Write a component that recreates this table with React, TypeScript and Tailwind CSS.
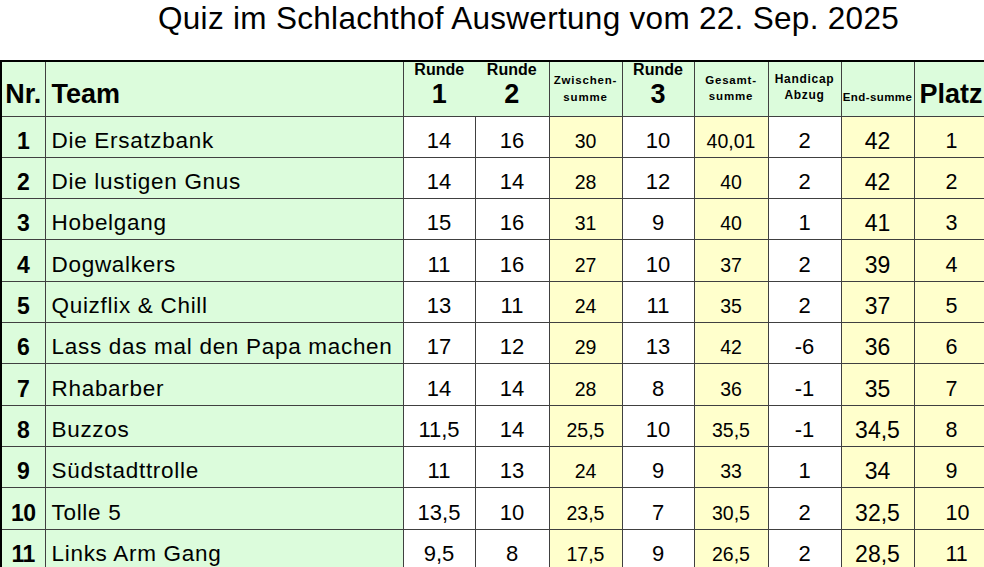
import React from "react";

type Row = {
  nr: number;
  team: string;
  r1: string;
  r2: string;
  zw: string;
  r3: string;
  ges: string;
  hc: string;
  end: string;
  platz: string;
};

const rows: Row[] = [
  { nr: 1, team: "Die Ersatzbank", r1: "14", r2: "16", zw: "30", r3: "10", ges: "40,01", hc: "2", end: "42", platz: "1" },
  { nr: 2, team: "Die lustigen Gnus", r1: "14", r2: "14", zw: "28", r3: "12", ges: "40", hc: "2", end: "42", platz: "2" },
  { nr: 3, team: "Hobelgang", r1: "15", r2: "16", zw: "31", r3: "9", ges: "40", hc: "1", end: "41", platz: "3" },
  { nr: 4, team: "Dogwalkers", r1: "11", r2: "16", zw: "27", r3: "10", ges: "37", hc: "2", end: "39", platz: "4" },
  { nr: 5, team: "Quizflix & Chill", r1: "13", r2: "11", zw: "24", r3: "11", ges: "35", hc: "2", end: "37", platz: "5" },
  { nr: 6, team: "Lass das mal den Papa machen", r1: "17", r2: "12", zw: "29", r3: "13", ges: "42", hc: "-6", end: "36", platz: "6" },
  { nr: 7, team: "Rhabarber", r1: "14", r2: "14", zw: "28", r3: "8", ges: "36", hc: "-1", end: "35", platz: "7" },
  { nr: 8, team: "Buzzos", r1: "11,5", r2: "14", zw: "25,5", r3: "10", ges: "35,5", hc: "-1", end: "34,5", platz: "8" },
  { nr: 9, team: "Südstadttrolle", r1: "11", r2: "13", zw: "24", r3: "9", ges: "33", hc: "1", end: "34", platz: "9" },
  { nr: 10, team: "Tolle 5", r1: "13,5", r2: "10", zw: "23,5", r3: "7", ges: "30,5", hc: "2", end: "32,5", platz: "10" },
  { nr: 11, team: "Links Arm Gang", r1: "9,5", r2: "8", zw: "17,5", r3: "9", ges: "26,5", hc: "2", end: "28,5", platz: "11" },
];

const font = { fontFamily: '"Liberation Sans", Arial, sans-serif' };

const line = "border border-[#404040]";
const green = "bg-[#dcfcdc]";
const yellow = "bg-[#ffffcc]";
const body = "align-bottom text-center leading-[22px] p-0 pb-[5px]";

export default function App() {
  return (
    <div className="w-[984px] h-[567px] overflow-hidden bg-white text-black" style={font}>
      {/* Title */}
      <div className="h-[60px] pl-[158px]">
        <h1 className="text-[31.5px] leading-[36px] font-normal tracking-[0.3px] whitespace-nowrap">
          Quiz im Schlachthof Auswertung vom 22. Sep. 2025
        </h1>
      </div>

      <table className="table-fixed border-collapse w-[990px] border-t-2 border-l-2 border-black">
        <colgroup>
          <col className="w-[44px]" />
          <col className="w-[358px]" />
          <col className="w-[72px]" />
          <col className="w-[74px]" />
          <col className="w-[73px]" />
          <col className="w-[72px]" />
          <col className="w-[74px]" />
          <col className="w-[73px]" />
          <col className="w-[73px]" />
          <col className="w-[77px]" />
        </colgroup>
        <thead>
          <tr className="h-[55px]">
            <th className={`${line} ${green} border-l-0 border-t-0 align-bottom p-0 pb-[8px] text-[27px] font-bold leading-none text-center`}>
              Nr.
            </th>
            <th className={`${line} ${green} border-t-0 align-bottom p-0 pb-[8px] pl-[6px] text-[27px] font-bold leading-none text-left`}>
              Team
            </th>
            <th className={`${line} ${green} border-t-0 border-r-0 align-top p-0 font-bold text-center`}>
              <div className="flex flex-col items-center">
                <span className="text-[16px] leading-none">Runde</span>
                <span className="text-[27px] leading-none mt-[3px]">1</span>
              </div>
            </th>
            <th className={`${line} ${green} border-t-0 border-l-0 align-top p-0 font-bold text-center`}>
              <div className="flex flex-col items-center">
                <span className="text-[16px] leading-none">Runde</span>
                <span className="text-[27px] leading-none mt-[3px]">2</span>
              </div>
            </th>
            <th className={`${line} ${green} border-t-0 align-top p-0 font-bold text-center`}>
              <div className="flex flex-col items-center pt-[10px] text-[11.5px] leading-[17px] tracking-[0.8px]">
                <span>Zwischen-</span>
                <span>summe</span>
              </div>
            </th>
            <th className={`${line} ${green} border-t-0 align-top p-0 font-bold text-center`}>
              <div className="flex flex-col items-center">
                <span className="text-[16px] leading-none">Runde</span>
                <span className="text-[27px] leading-none mt-[3px]">3</span>
              </div>
            </th>
            <th className={`${line} ${green} border-t-0 align-top p-0 font-bold text-center`}>
              <div className="flex flex-col items-center pt-[10px] text-[11.5px] leading-[16px] tracking-[0.8px]">
                <span>Gesamt-</span>
                <span>summe</span>
              </div>
            </th>
            <th className={`${line} ${green} border-t-0 align-top p-0 font-bold text-center`}>
              <div className="flex flex-col items-center pt-[9px] text-[12px] leading-[16px] tracking-[0.7px]">
                <span>Handicap</span>
                <span>Abzug</span>
              </div>
            </th>
            <th className={`${line} ${green} border-t-0 align-bottom p-0 pb-[12px] font-bold text-center text-[11.5px] leading-none tracking-[0.4px] whitespace-nowrap`}>
              End-summe
            </th>
            <th className={`${line} ${green} border-t-0 align-bottom p-0 pb-[8px] pl-[5px] text-[27px] font-bold leading-none text-left`}>
              Platz
            </th>
          </tr>
        </thead>
        <tbody>
          {rows.map((r) => (
            <tr key={r.nr} className="h-[41.33px]">
              <td className={`${line} ${green} border-l-0 ${body} text-[23px] font-bold tracking-[-0.5px]`}>{r.nr}</td>
              <td className={`${line} ${green} ${body} text-left pl-[6px] text-[22.5px] tracking-[0.7px] whitespace-nowrap`}>
                {r.team}
              </td>
              <td className={`${line} bg-white ${body} text-[22px]`}>{r.r1}</td>
              <td className={`${line} bg-white ${body} text-[22px]`}>{r.r2}</td>
              <td className={`${line} ${yellow} ${body} text-[19.5px]`}>{r.zw}</td>
              <td className={`${line} bg-white ${body} text-[22px]`}>{r.r3}</td>
              <td className={`${line} ${yellow} ${body} text-[19.5px]`}>{r.ges}</td>
              <td className={`${line} bg-white ${body} text-[22px]`}>{r.hc}</td>
              <td className={`${line} ${yellow} ${body} text-[23px]`}>{r.end}</td>
              <td className={`${line} ${yellow} ${body} text-[21.5px] text-left pl-[31px]`}>{r.platz}</td>
            </tr>
          ))}
        </tbody>
      </table>
    </div>
  );
}
